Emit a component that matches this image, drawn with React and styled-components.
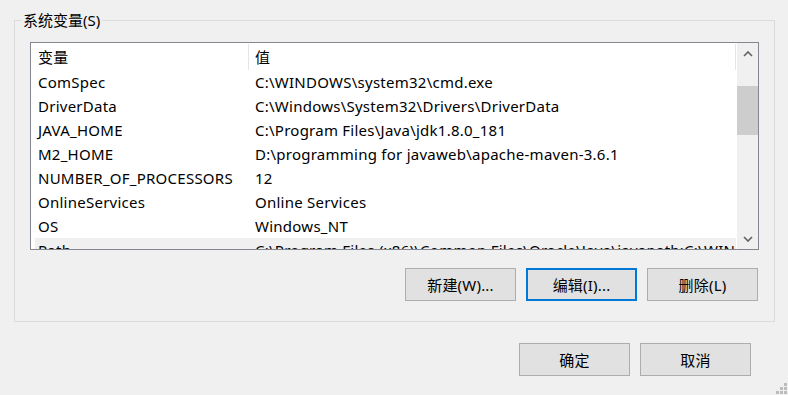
import React from "react";
import styled, { createGlobalStyle } from "styled-components";

const GlobalStyle = createGlobalStyle`
  html, body { margin: 0; padding: 0; background: #f0f0f0; }
  body {
    font-family: "Noto Sans", "Noto Sans CJK SC", sans-serif;
    font-size: 15px;
    color: #000;
  }
`;

const Page = styled.div`
  position: relative;
  width: 788px;
  height: 395px;
  box-sizing: border-box;
  padding: 20px 13px 0 14px;
  overflow: hidden;
`;

const GroupBox = styled.section`
  position: relative;
  border: 1px solid #dcdcdc;
  padding: 21px 15px 20px 15px;
  display: flex;
  flex-direction: column;
`;

const GroupTitle = styled.span`
  position: absolute;
  top: -11px;
  left: 6px;
  padding: 0 2px;
  line-height: 20px;
  background: #f0f0f0;
  white-space: nowrap;
`;

const ListView = styled.div`
  height: 208px;
  box-sizing: border-box;
  border: 1px solid #828790;
  background: #fff;
  display: flex;
  overflow: hidden;
  letter-spacing: 0.25px;
`;

const ListContent = styled.div`
  flex: 1;
  min-width: 0;
  overflow: hidden;
  display: flex;
  flex-direction: column;
`;

const HeaderRow = styled.div`
  display: flex;
  height: 27px;
  flex-shrink: 0;
  padding-top: 1px;
  box-sizing: border-box;
`;

const HeaderCell = styled.div`
  width: ${(p) => p.$w}px;
  box-sizing: border-box;
  padding-left: ${(p) => p.$pad}px;
  border-right: 1px solid #e5e5e5;
  line-height: 26px;
  white-space: nowrap;
  overflow: hidden;
`;

const Row = styled.div`
  display: flex;
  height: 24px;
  flex-shrink: 0;
  margin: 0 1px 0 4px;
  background: ${(p) => (p.$hover ? "#f0f0f0" : "transparent")};
  white-space: nowrap;
`;

const Cell = styled.div`
  width: ${(p) => (p.$w ? `${p.$w}px` : "auto")};
  flex: ${(p) => (p.$w ? "none" : 1)};
  box-sizing: border-box;
  padding-left: ${(p) => p.$pad}px;
  line-height: 24px;
  overflow: hidden;
`;

const ScrollBar = styled.div`
  width: 21px;
  flex-shrink: 0;
  background: #f0f0f0;
  display: flex;
  flex-direction: column;
`;

const ArrowButton = styled.div`
  height: 21px;
  flex-shrink: 0;
  display: flex;
  align-items: center;
  justify-content: center;
`;

const Track = styled.div`
  flex: 1;
  padding-top: 22px;
`;

const Thumb = styled.div`
  height: 49px;
  background: #cdcdcd;
`;

const ButtonRow = styled.div`
  display: flex;
  justify-content: flex-end;
  gap: ${(p) => p.$gap}px;
  margin-top: ${(p) => p.$mt}px;
  padding-right: ${(p) => p.$pr}px;
`;

const Button = styled.button`
  width: 111px;
  height: 33px;
  box-sizing: border-box;
  background: #e1e1e1;
  border: ${(p) => (p.$focused ? "2px solid #0078d7" : "1px solid #adadad")};
  font-family: inherit;
  font-size: 15px;
  letter-spacing: 0.2px;
  color: #000;
  padding: 0;
  margin: 0;
  line-height: 20px;
  outline: none;
`;

const Grip = styled.svg`
  position: absolute;
  right: 0;
  bottom: 0;
`;

const rows = [
  ["ComSpec", "C:\\WINDOWS\\system32\\cmd.exe"],
  ["DriverData", "C:\\Windows\\System32\\Drivers\\DriverData"],
  ["JAVA_HOME", "C:\\Program Files\\Java\\jdk1.8.0_181"],
  ["M2_HOME", "D:\\programming for javaweb\\apache-maven-3.6.1"],
  ["NUMBER_OF_PROCESSORS", "12"],
  ["OnlineServices", "Online Services"],
  ["OS", "Windows_NT"],
  ["Path", "C:\\Program Files (x86)\\Common Files\\Oracle\\Java\\javapath;C:\\WINDOWS\\system32"],
];

const Chevron = ({ down }) => (
  <svg width="10" height="6" viewBox="0 0 10 6">
    <path
      d={down ? "M1 1 L5 5 L9 1" : "M1 5 L5 1 L9 5"}
      fill="none"
      stroke="#606060"
      strokeWidth="1.6"
    />
  </svg>
);

export default function App() {
  return (
    <>
      <GlobalStyle />
      <Page>
        <GroupBox>
          <GroupTitle>系统变量(S)</GroupTitle>
          <ListView>
            <ListContent>
              <HeaderRow>
                <HeaderCell $w={218} $pad={7}>变量</HeaderCell>
                <HeaderCell $w={487} $pad={6}>值</HeaderCell>
              </HeaderRow>
              {rows.map(([k, v], i) => (
                <Row key={k} $hover={i === rows.length - 1}>
                  <Cell $w={214} $pad={3}>{k}</Cell>
                  <Cell $pad={6}>{v}</Cell>
                </Row>
              ))}
            </ListContent>
            <ScrollBar>
              <ArrowButton><Chevron /></ArrowButton>
              <Track><Thumb /></Track>
              <ArrowButton><Chevron down /></ArrowButton>
            </ScrollBar>
          </ListView>
          <ButtonRow $gap={10} $mt={18} $pr={1}>
            <Button>新建(W)...</Button>
            <Button $focused>编辑(I)...</Button>
            <Button>删除(L)</Button>
          </ButtonRow>
        </GroupBox>
        <ButtonRow $gap={10} $mt={21} $pr={24}>
          <Button>确定</Button>
          <Button>取消</Button>
        </ButtonRow>
        <Grip width="14" height="14" viewBox="0 0 14 14">
          {[[10, 2], [6, 6], [10, 6], [2, 10], [6, 10], [10, 10]].map(([x, y]) => (
            <rect key={`${x}-${y}`} x={x} y={y} width="3" height="3" fill="#bcbcbc" />
          ))}
        </Grip>
      </Page>
    </>
  );
}
